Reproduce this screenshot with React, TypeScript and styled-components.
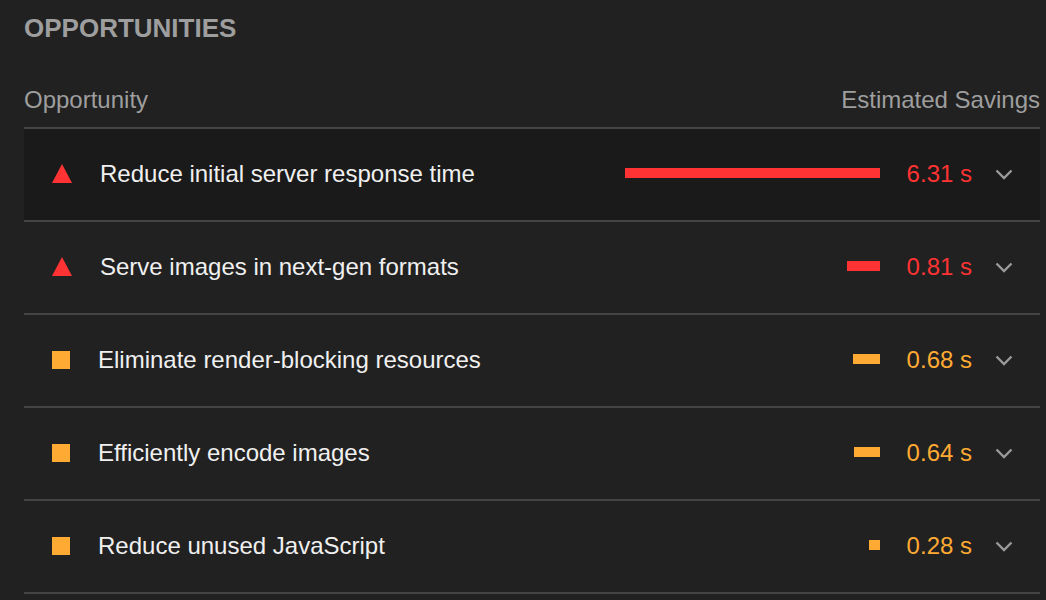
import React from "react";
import styled, { createGlobalStyle } from "styled-components";

const GlobalStyle = createGlobalStyle`
  html, body {
    margin: 0;
    padding: 0;
    background: #212121;
  }
  body {
    font-family: "Liberation Sans", Arial, Helvetica, sans-serif;
    -webkit-font-smoothing: antialiased;
  }
`;

const FAIL = "#ff3333";
const AVERAGE = "#ffaa33";

const Section = styled.section`
  padding: 0 6px 0 24px;
  height: 600px;
  overflow: hidden;
  box-sizing: border-box;
`;

const Title = styled.h2`
  margin: 0;
  padding-top: 13px;
  font-size: 26px;
  line-height: 30px;
  font-weight: 700;
  color: #9e9e9e;
`;

const HeaderRow = styled.div`
  margin-top: 43px;
  display: flex;
  justify-content: space-between;
  font-size: 24px;
  line-height: 28px;
  color: #9e9e9e;
  padding-bottom: 13px;
  border-bottom: 2px solid #444444;
`;

const Row = styled.div<{ $highlight?: boolean }>`
  display: flex;
  align-items: center;
  padding-bottom: 2px;
  box-sizing: border-box;
  height: 93px;
  border-bottom: 2px solid #444444;
  background: ${(p) => (p.$highlight ? "#1a1a1a" : "transparent")};
`;

const IconBox = styled.div`
  margin-left: 28px;
  margin-right: 28px;
  display: flex;
  align-items: center;
`;

const Square = styled.span`
  display: block;
  width: 18px;
  height: 18px;
  background: ${AVERAGE};
`;

const Label = styled.div`
  flex: 1;
  font-size: 24px;
  line-height: 28px;
  color: #f0f0f0;
  white-space: nowrap;
`;

const BarTrack = styled.div`
  display: flex;
  justify-content: flex-end;
  width: 260px;
`;

const Bar = styled.div<{ $color: string }>`
  height: 10px;
  margin-bottom: 1px;
  background: ${(p) => p.$color};
`;

const Value = styled.div<{ $color: string }>`
  width: 92px;
  text-align: right;
  font-size: 24px;
  line-height: 28px;
  color: ${(p) => p.$color};
`;

const Chevron = styled.svg`
  margin-left: 23px;
  margin-right: 27px;
  margin-top: 2px;
  display: block;
`;

type Item = { title: string; value: string; bar: number; fail: boolean };

const items: Item[] = [
  { title: "Reduce initial server response time", value: "6.31 s", bar: 255, fail: true },
  { title: "Serve images in next-gen formats", value: "0.81 s", bar: 33, fail: true },
  { title: "Eliminate render-blocking resources", value: "0.68 s", bar: 27, fail: false },
  { title: "Efficiently encode images", value: "0.64 s", bar: 26, fail: false },
  { title: "Reduce unused JavaScript", value: "0.28 s", bar: 11, fail: false },
];

const Triangle = () => (
  <svg width="20" height="19" viewBox="0 0 20 19">
    <polygon points="10,0 20,19 0,19" fill={FAIL} />
  </svg>
);

export default function App() {
  return (
    <>
      <GlobalStyle />
      <Section>
        <Title>OPPORTUNITIES</Title>
        <HeaderRow>
          <span>Opportunity</span>
          <span>Estimated Savings</span>
        </HeaderRow>
        {items.map((it, i) => {
          const color = it.fail ? FAIL : AVERAGE;
          return (
            <Row key={it.title} $highlight={i === 0}>
              <IconBox>{it.fail ? <Triangle /> : <Square />}</IconBox>
              <Label>{it.title}</Label>
              <BarTrack>
                <Bar $color={color} style={{ width: it.bar }} />
              </BarTrack>
              <Value $color={color}>{it.value}</Value>
              <Chevron width="18" height="11" viewBox="0 0 18 11">
                <polyline
                  points="1.5,1.5 9,9 16.5,1.5"
                  fill="none"
                  stroke="#9a9a9a"
                  strokeWidth="2.4"
                />
              </Chevron>
            </Row>
          );
        })}
      </Section>
    </>
  );
}
